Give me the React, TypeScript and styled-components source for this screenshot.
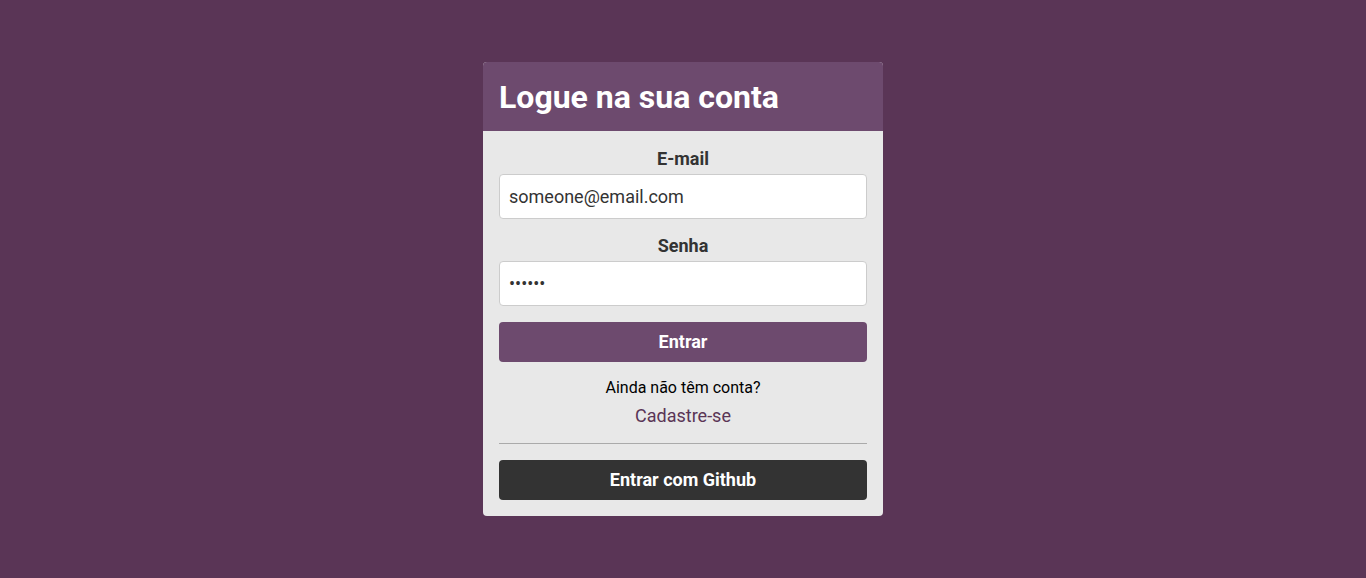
import React from "react";
import styled, { createGlobalStyle } from "styled-components";

const Global = createGlobalStyle`
  html, body { margin: 0; padding: 0; background: #5a3556; }
  body { font-family: Roboto, "Liberation Sans", sans-serif; }
  * { box-sizing: border-box; }
`;

const Page = styled.div`
  min-height: 578px;
  display: flex;
  justify-content: center;
  align-items: flex-start;
  padding-top: 62px;
`;

const Card = styled.div`
  width: 400px;
  background: #e8e8e8;
  border-radius: 4px;
  overflow: hidden;
`;

const Header = styled.div`
  background: #6d4a6e;
  padding: 17px 16px 15px;
  height: 69px;
  display: flex;
  align-items: center;
`;

const Title = styled.h1`
  margin: 0;
  color: #fff;
  font-size: 32px;
  font-weight: 700;
  line-height: 37px;
`;

const Body = styled.form`
  padding: 17px 16px 16px;
  display: flex;
  flex-direction: column;
`;

const Label = styled.label<{ $top?: number }>`
  display: block;
  text-align: center;
  font-size: 18px;
  font-weight: 700;
  color: #333;
  line-height: 21px;
  margin-top: ${(p) => p.$top ?? 0}px;
  margin-bottom: 5px;
`;

const Input = styled.input`
  width: 100%;
  height: 45px;
  border: 1px solid #ccc;
  border-radius: 4px;
  background: #fff;
  padding: 0 9px;
  font-family: Roboto, "Liberation Sans", sans-serif;
  font-size: 18px;
  color: #333;
  outline: none;
`;

const Button = styled.button<{ $dark?: boolean; $top: number }>`
  width: 100%;
  height: 40px;
  border: none;
  border-radius: 4px;
  padding: 0 0 2px;
  background: ${(p) => (p.$dark ? "#333333" : "#6d4a6e")};
  color: #fff;
  font-family: Roboto, "Liberation Sans", sans-serif;
  font-size: 18px;
  font-weight: 700;
  margin-top: ${(p) => p.$top}px;
  cursor: pointer;
`;

const Question = styled.p`
  margin: 16px 0 0;
  text-align: center;
  font-size: 16px;
  line-height: 19px;
  color: #000;
`;

const SignUp = styled.a`
  display: block;
  margin-top: 8px;
  text-align: center;
  font-size: 18px;
  line-height: 21px;
  color: #5a3556;
  text-decoration: none;
`;

const Divider = styled.hr`
  margin: 17px 0 0;
  border: none;
  border-top: 1px solid #aaa;
  height: 0;
`;

export default function App() {
  return (
    <>
      <Global />
      <Page>
        <Card>
          <Header>
            <Title>Logue na sua conta</Title>
          </Header>
          <Body onSubmit={(e) => e.preventDefault()}>
            <Label htmlFor="email">E-mail</Label>
            <Input id="email" type="email" defaultValue="someone@email.com" />
            <Label htmlFor="senha" $top={16}>Senha</Label>
            <Input id="senha" type="password" defaultValue="123456" />
            <Button $top={16}>Entrar</Button>
            <Question>Ainda não têm conta?</Question>
            <SignUp href="#">Cadastre-se</SignUp>
            <Divider />
            <Button type="button" $dark $top={16}>Entrar com Github</Button>
          </Body>
        </Card>
      </Page>
    </>
  );
}
